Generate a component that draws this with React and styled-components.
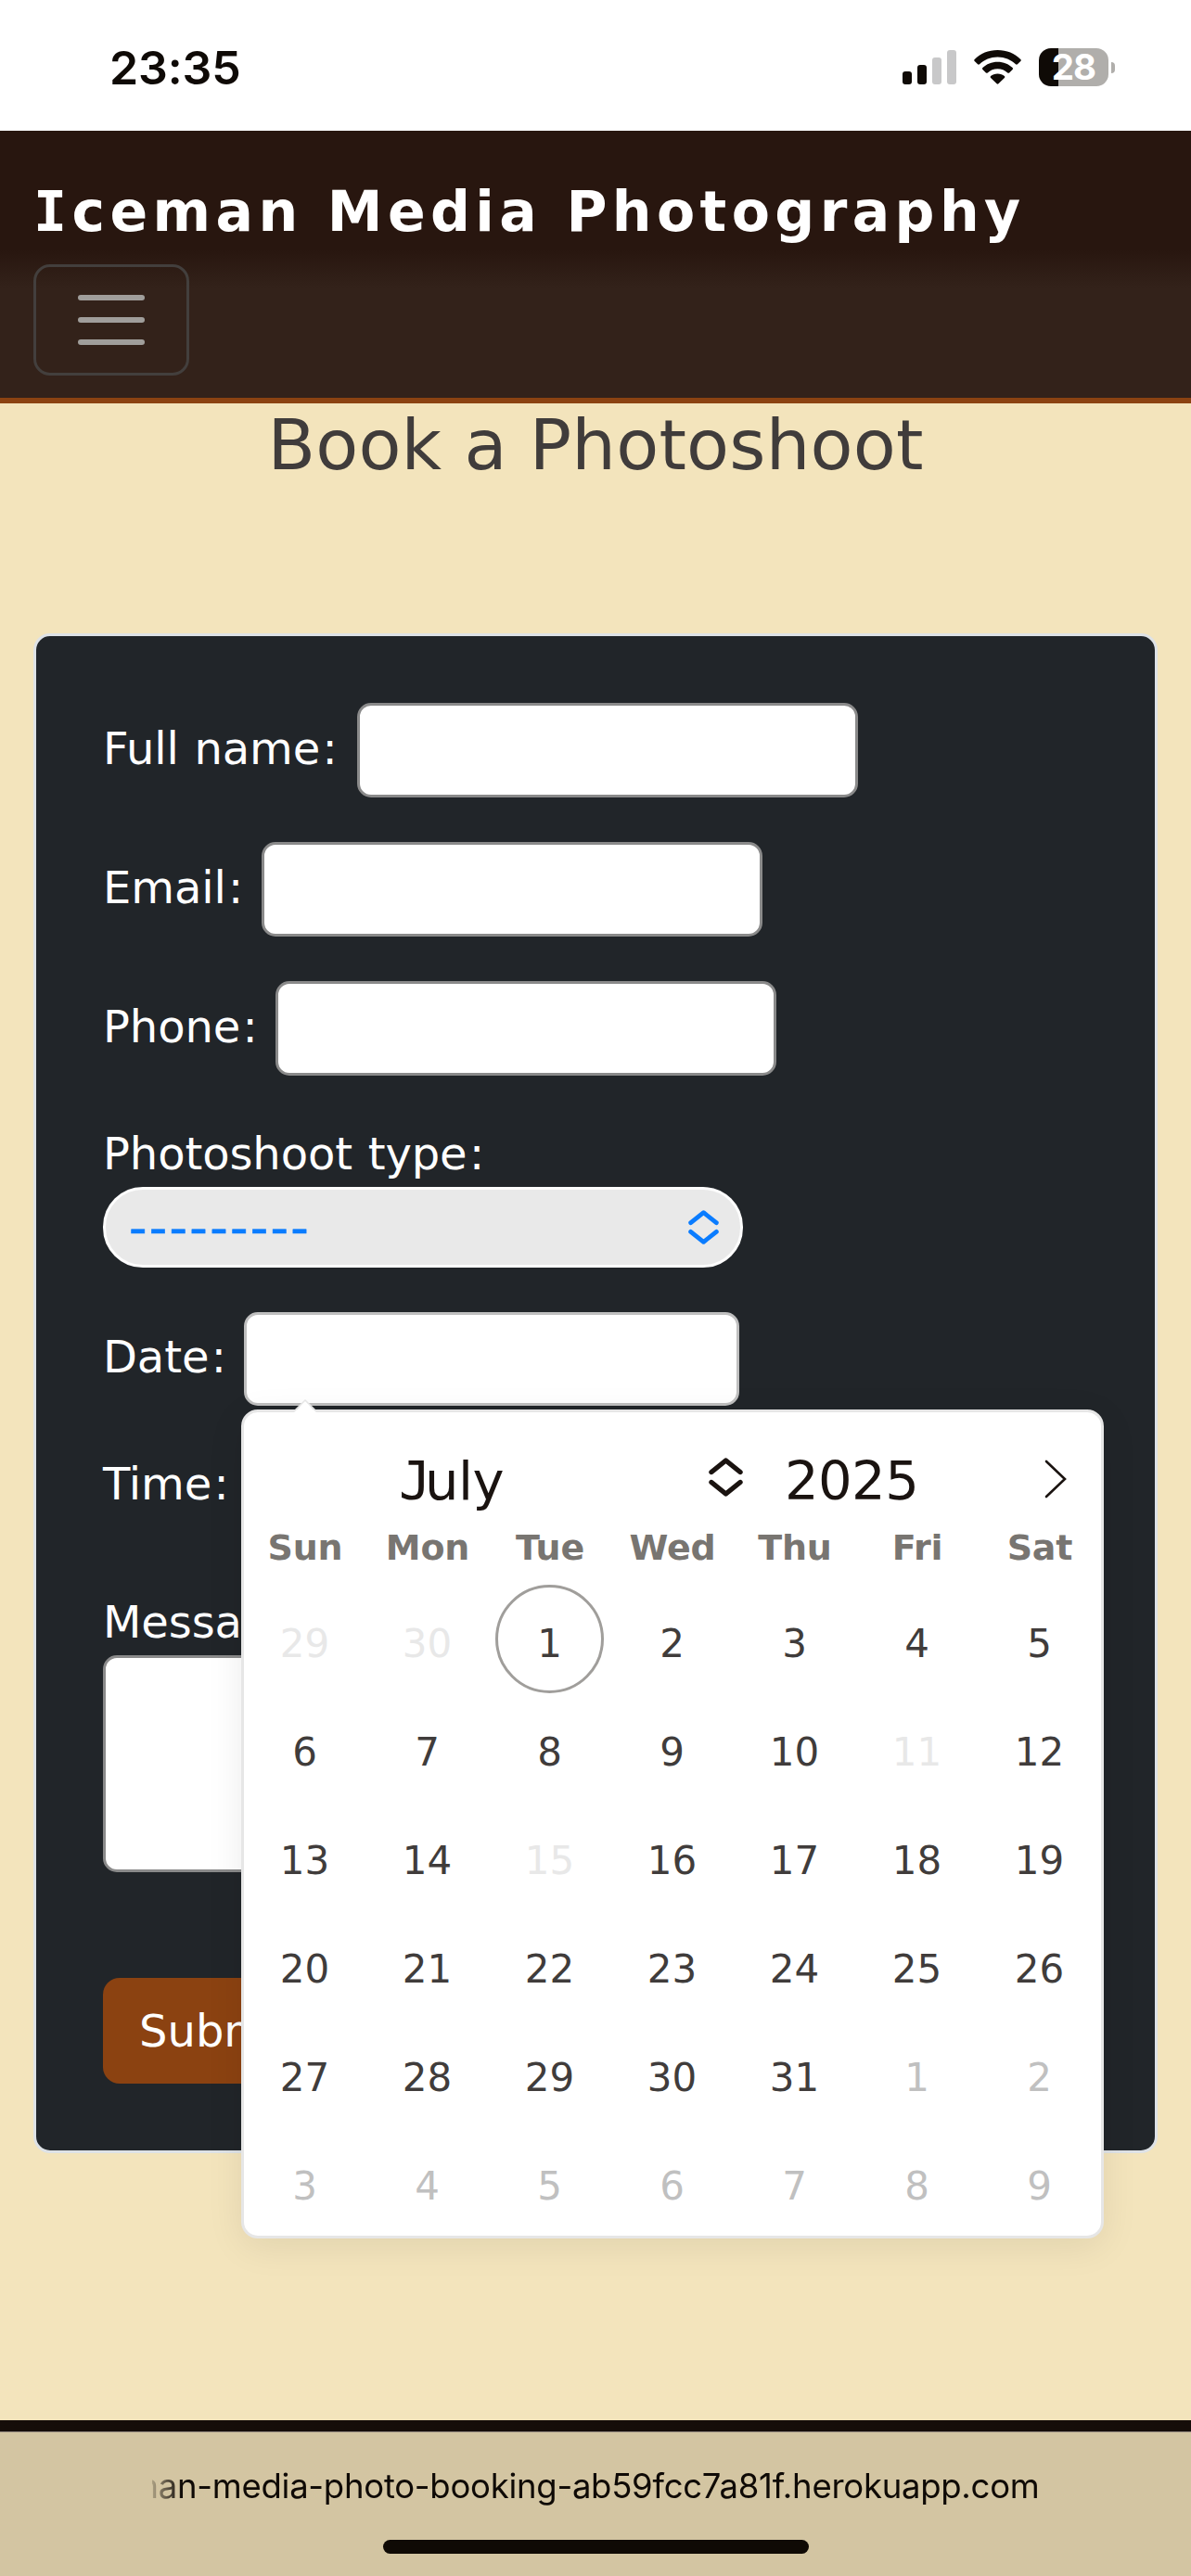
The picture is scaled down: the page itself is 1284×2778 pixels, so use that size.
import React from "react";
import styled, { createGlobalStyle, css } from "styled-components";

const GlobalStyle = createGlobalStyle`
  *, *::before, *::after { box-sizing: border-box; }
  html, body { margin: 0; padding: 0; background: #f3e4bc; }
  body {
    font-family: "DejaVu Sans", Verdana, sans-serif;
    font-size: 48px;
    line-height: 72px;
    color: #403c3b;
  }
`;

const Page = styled.div`
  display: flex;
  flex-direction: column;
  width: 1284px;
  height: 2778px;
  overflow: hidden;
  background: #f3e4bc;
`;

/* ---------- phone status bar ---------- */

const StatusBar = styled.div`
  display: flex;
  flex: none;
  align-items: flex-start;
  justify-content: space-between;
  height: 141px;
  padding: 52px 82px 0 118px;
  background: #fff;
`;

const Clock = styled.span`
  font: 600 50px/42px Inter, sans-serif;
  letter-spacing: -0.1px;
  color: #0f0a06;
`;

const StatusIcons = styled.div`
  display: flex;
  align-items: center;
  height: 41px;
`;

const Signal = styled.svg`
  width: 58px;
  height: 37px;
  margin-right: 19px;
`;

const Wifi = styled.svg`
  width: 51px;
  height: 37px;
  margin-right: 19px;
`;

const Battery = styled.div`
  display: flex;
  align-items: center;
  gap: 3px;
`;

const BatteryBody = styled.div`
  width: 75px;
  height: 41px;
  border-radius: 13px;
  background: linear-gradient(90deg, #0f0a06 21px, #b0aeab 21px);
  font: 700 38.5px/41px Inter, sans-serif;
  letter-spacing: -0.8px;
  text-align: center;
  color: #fff;
`;

const BatteryTip = styled.div`
  width: 4px;
  height: 12px;
  border-radius: 0 4px 4px 0;
  background: #b0aeab;
`;

/* ---------- site header ---------- */

const Navbar = styled.header`
  display: flex;
  flex: none;
  flex-direction: column;
  align-items: flex-start;
  height: 294px;
  padding: 42px 36px 24px;
  border-bottom: 6px solid #8b4211;
  background: linear-gradient(180deg, #28160f 128px, #33221a 170px);
`;

const Brand = styled.a`
  font-size: 60px;
  font-weight: 700;
  line-height: 90px;
  letter-spacing: 5.4px;
  white-space: nowrap;
  color: #fff;
`;

const SerifCapital = styled.span`
  font-family: "DejaVu Sans Mono", monospace;
  margin-right: ${(p) => p.$after || "0"};
`;

const Toggler = styled.button`
  display: flex;
  flex-direction: column;
  align-items: center;
  justify-content: center;
  gap: 18px;
  width: 168px;
  height: 120px;
  margin-top: 12px;
  padding: 0;
  border: 3px solid #433f3d;
  border-radius: 18px;
  background: transparent;
`;

const TogglerBar = styled.span`
  width: 72px;
  height: 6px;
  border-radius: 3px;
  background: #a09e9b;
`;

/* ---------- booking form ---------- */

const Main = styled.main`
  display: flex;
  flex: 1;
  flex-direction: column;
  padding: 0 36px;
`;

const Heading = styled.h2`
  margin: 0 0 158px;
  font-size: 75.2px;
  font-weight: 400;
  line-height: 90px;
  letter-spacing: 0.2px;
  text-align: center;
`;

const Card = styled.form`
  height: 1639px;
  padding: 72px;
  border: 3px solid #dee2e6;
  border-radius: 18px;
  background: #212529;
  color: #fff;
`;

const Field = styled.div`
  position: relative;
  display: flex;
  flex-direction: ${(p) => (p.$stacked ? "column" : "row")};
  align-items: ${(p) => (p.$stacked ? "flex-start" : "center")};
  min-height: ${(p) => p.$height || 102}px;
  margin-bottom: 48px;
`;

const LabelText = styled.label`
  flex: none;
  width: ${(p) => (p.$width ? `${p.$width}px` : "auto")};
  height: 72px;
  margin-bottom: ${(p) => (p.$width ? "5px" : "0")};
  letter-spacing: -0.1px;
  word-spacing: 1.6px;
  white-space: nowrap;
`;

const Colon = styled.span`
  padding: 0 2.4px;
`;

const inputBox = css`
  padding: 0;
  border: 3px solid ${(p) => p.$border || "#8a8a8a"};
  border-radius: 15px;
  background: #fff;
  outline: none;
`;

const TextInput = styled.input`
  ${inputBox}
  width: ${(p) => p.$width || 540}px;
  height: ${(p) => p.$height || 102}px;
`;

const TextArea = styled.textarea`
  ${inputBox}
  width: 560px;
  height: 234px;
  resize: none;
`;

const SelectPill = styled.div`
  display: flex;
  align-items: center;
  justify-content: space-between;
  width: 690px;
  height: 87px;
  padding: 0 23px 0 25px;
  border: 3px solid #fdfdfd;
  border-radius: 43px;
  background: #e9e9e9;
  color: #0a7cff;
`;

const Dashes = styled.span`
  padding-top: 2px;
  font-size: 54px;
  letter-spacing: 2.3px;
  -webkit-text-stroke: 0.6px currentColor;
`;

const Stepper = styled.svg`
  flex: none;
  width: ${(p) => p.$w}px;
  height: ${(p) => p.$h}px;
  fill: none;
  stroke: currentColor;
  stroke-width: 5.4;
  stroke-linecap: round;
  stroke-linejoin: round;
`;

const SubmitButton = styled.button`
  display: block;
  width: 240px;
  height: 114px;
  margin-top: 114px;
  padding: 0 0 0 39px;
  border: 0;
  border-radius: 18px;
  background: #8b4211;
  font: 400 48px/72px "DejaVu Sans", Verdana, sans-serif;
  text-align: left;
  color: #fff;
`;

/* ---------- date picker ---------- */

const Calendar = styled.div`
  position: absolute;
  z-index: 2;
  top: 105px;
  left: 149px;
  width: 930px;
  height: 894px;
  border: 3px solid #e6e6e6;
  border-radius: 18px;
  background: #fff;
  box-shadow: 0 9px 39px rgba(0, 0, 0, 0.08);
  color: #403c3b;
`;

const CalendarArrow = styled.svg`
  position: absolute;
  top: -14px;
  left: 54px;
  width: 24px;
  height: 15px;
`;

const MonthBar = styled.div`
  display: flex;
  align-items: flex-start;
  height: 102px;
  padding: 41px 37px 0 167px;
  font-size: 57.6px;
  line-height: 67px;
  color: #1a1310;
`;

const MonthName = styled.span`
  width: 334px;
  letter-spacing: -0.6px;
`;

const Year = styled.span`
  width: 280px;
  margin-left: 45px;
  letter-spacing: -0.6px;
`;

const StepperSlot = styled.span`
  display: flex;
  padding-top: 8px;
`;

const NextIcon = styled.svg`
  flex: none;
  width: 24px;
  height: 42px;
  margin-top: 10px;
  fill: none;
  stroke: #1a1310;
  stroke-width: 2.6;
  stroke-linecap: round;
`;

const Weekdays = styled.div`
  display: grid;
  grid-template-columns: repeat(7, 132px);
  height: 84px;
  font-size: 38px;
  font-weight: 700;
  line-height: 88px;
  text-align: center;
  letter-spacing: -0.2px;
  color: #787571;
`;

const Days = styled.div`
  display: grid;
  grid-template-columns: repeat(7, 132px);
  grid-auto-rows: 117px;
  justify-items: center;
  margin-left: -0.5px;
`;

const dayColors = { normal: "#403c3b", disabled: "#e8e8e8", next: "#c0c0c0" };

const Day = styled.span`
  width: 117px;
  height: 117px;
  padding-top: ${(p) => (p.$today ? 7 : 10)}px;
  border: ${(p) => (p.$today ? "3px solid #a09e9b" : "0")};
  border-radius: 50%;
  font-size: 42px;
  line-height: 108px;
  text-align: center;
  color: ${(p) => dayColors[p.$tone]};
`;

/* ---------- browser bottom bar ---------- */

const Footer = styled.div`
  flex: none;
  height: 13px;
  border-bottom: 1px solid #857b74;
  background: #150d09;
`;

const AddressBar = styled.div`
  display: flex;
  flex: none;
  flex-direction: column;
  align-items: center;
  height: 155px;
  padding-top: 34px;
  background: #d3c5a2;
`;

const Url = styled.div`
  display: flex;
  justify-content: flex-end;
  width: 957px;
  height: 48px;
  overflow: hidden;
  font: 400 36.5px/48px Inter, sans-serif;
  letter-spacing: -0.27px;
  white-space: nowrap;
  color: #0f0a06;
  mask-image: linear-gradient(90deg, rgba(0, 0, 0, 0.2), #000 32px);
`;

const HomeIndicator = styled.div`
  width: 459px;
  height: 15px;
  margin-top: 34px;
  border-radius: 8px;
  background: #0f0a05;
`;

const weekdayNames = ["Sun", "Mon", "Tue", "Wed", "Thu", "Fri", "Sat"];

const days = [
  { n: 29, tone: "disabled" },
  { n: 30, tone: "disabled" },
  ...Array.from({ length: 31 }, (_, i) => ({
    n: i + 1,
    tone: [11, 15].includes(i + 1) ? "disabled" : "normal",
    today: i === 0,
  })),
  ...Array.from({ length: 9 }, (_, i) => ({ n: i + 1, tone: "next" })),
];

function Label({ text, width }) {
  return (
    <LabelText $width={width}>
      {text}
      <Colon>:</Colon>
    </LabelText>
  );
}

function UpDown({ w, h }) {
  return (
    <Stepper $w={w} $h={h} viewBox="0 0 37 42" preserveAspectRatio="none">
      <path d="M3 15.5 18.5 3 34 15.5M3 26.5 18.5 39 34 26.5" />
    </Stepper>
  );
}

function DatePicker() {
  return (
    <Calendar>
      <CalendarArrow viewBox="0 0 24 15">
        <path d="M0 14 12 1 24 14V15H0Z" fill="#fff" />
        <path d="M0 13 12 1 24 13" fill="none" stroke="#e6e6e6" strokeWidth="1.5" />
      </CalendarArrow>
      <MonthBar>
        <MonthName>
          <SerifCapital $after="-6px">J</SerifCapital>uly
        </MonthName>
        <StepperSlot>
          <UpDown w={37} h={42} />
        </StepperSlot>
        <Year>2025</Year>
        <NextIcon viewBox="0 0 24 42">
          <path d="M2 2 22 21 2 40" />
        </NextIcon>
      </MonthBar>
      <Weekdays>
        {weekdayNames.map((name) => (
          <span key={name}>{name}</span>
        ))}
      </Weekdays>
      <Days>
        {days.map((d, i) => (
          <Day key={i} $tone={d.tone} $today={d.today}>
            {d.n}
          </Day>
        ))}
      </Days>
    </Calendar>
  );
}

export default function App() {
  return (
    <>
      <GlobalStyle />
      <Page>
        <StatusBar>
          <Clock>23:35</Clock>
          <StatusIcons>
            <Signal viewBox="0 0 58 37">
              <rect x="0" y="23" width="10" height="14" rx="3" fill="#0f0a06" />
              <rect x="16" y="16" width="10" height="21" rx="3" fill="#0f0a06" />
              <rect x="32" y="8" width="10" height="29" rx="3" fill="#c8c8c9" />
              <rect x="48" y="0" width="10" height="37" rx="3" fill="#c8c8c9" />
            </Signal>
            <Wifi viewBox="0 0 51 37" fill="#0f0a06">
              <path d="M25.5 0C35.300 0 44 3.700 50.300 9.900Q51.300 10.900 50.300 11.900L46.900 15.200Q46 16.100 45 15.200C39.900 10.400 33.100 7.500 25.500 7.500S11.100 10.400 6 15.200Q5 16.100 4.100 15.200L.7 11.900Q-.3 10.900.7 9.900C7 3.700 15.700 0 25.500 0Z" />
              <path d="M25.500 12.700C31.900 12.700 37.500 15.100 41.600 19Q42.600 20 41.600 21L38.100 24.400Q37.200 25.200 36.200 24.400C33.400 21.900 29.700 20.300 25.500 20.300S17.600 21.900 14.800 24.400Q13.800 25.200 12.900 24.400L9.400 21Q8.400 20 9.400 19C13.500 15.100 19.100 12.700 25.500 12.700Z" />
              <path d="M25.500 25.500C28.500 25.500 31 26.500 32.900 28.100Q33.800 29 32.900 29.900L26.400 36.300Q25.500 37.200 24.600 36.300L18.100 29.900Q17.200 29 18.100 28.100C20 26.500 22.500 25.500 25.500 25.500Z" />
            </Wifi>
            <Battery>
              <BatteryBody>28</BatteryBody>
              <BatteryTip />
            </Battery>
          </StatusIcons>
        </StatusBar>

        <Navbar>
          <Brand>
            <SerifCapital>I</SerifCapital>ceman Media Photography
          </Brand>
          <Toggler aria-label="Toggle navigation">
            <TogglerBar />
            <TogglerBar />
            <TogglerBar />
          </Toggler>
        </Navbar>

        <Main>
          <Heading>Book a Photoshoot</Heading>
          <Card>
            <Field>
              <Label text="Full name" width={274} />
              <TextInput />
            </Field>
            <Field>
              <Label text="Email" width={171} />
              <TextInput />
            </Field>
            <Field>
              <Label text="Phone" width={186} />
              <TextInput />
            </Field>
            <Field $stacked $height={159}>
              <Label text="Photoshoot type" />
              <SelectPill>
                <Dashes>---------</Dashes>
                <UpDown w={33} h={37} />
              </SelectPill>
            </Field>
            <Field $height={101}>
              <Label text="Date" width={152} />
              <TextInput $width={534} $height={101} $border="#bfbfbf" />
              <DatePicker />
            </Field>
            <Field $stacked $height={101}>
              <Label text="Time" />
            </Field>
            <Field $stacked $height={306}>
              <Label text="Message" />
              <TextArea />
            </Field>
            <SubmitButton type="button">Submit</SubmitButton>
          </Card>
        </Main>

        <Footer />
        <AddressBar>
          <Url>iceman-media-photo-booking-ab59fcc7a81f.herokuapp.com</Url>
          <HomeIndicator />
        </AddressBar>
      </Page>
    </>
  );
}
